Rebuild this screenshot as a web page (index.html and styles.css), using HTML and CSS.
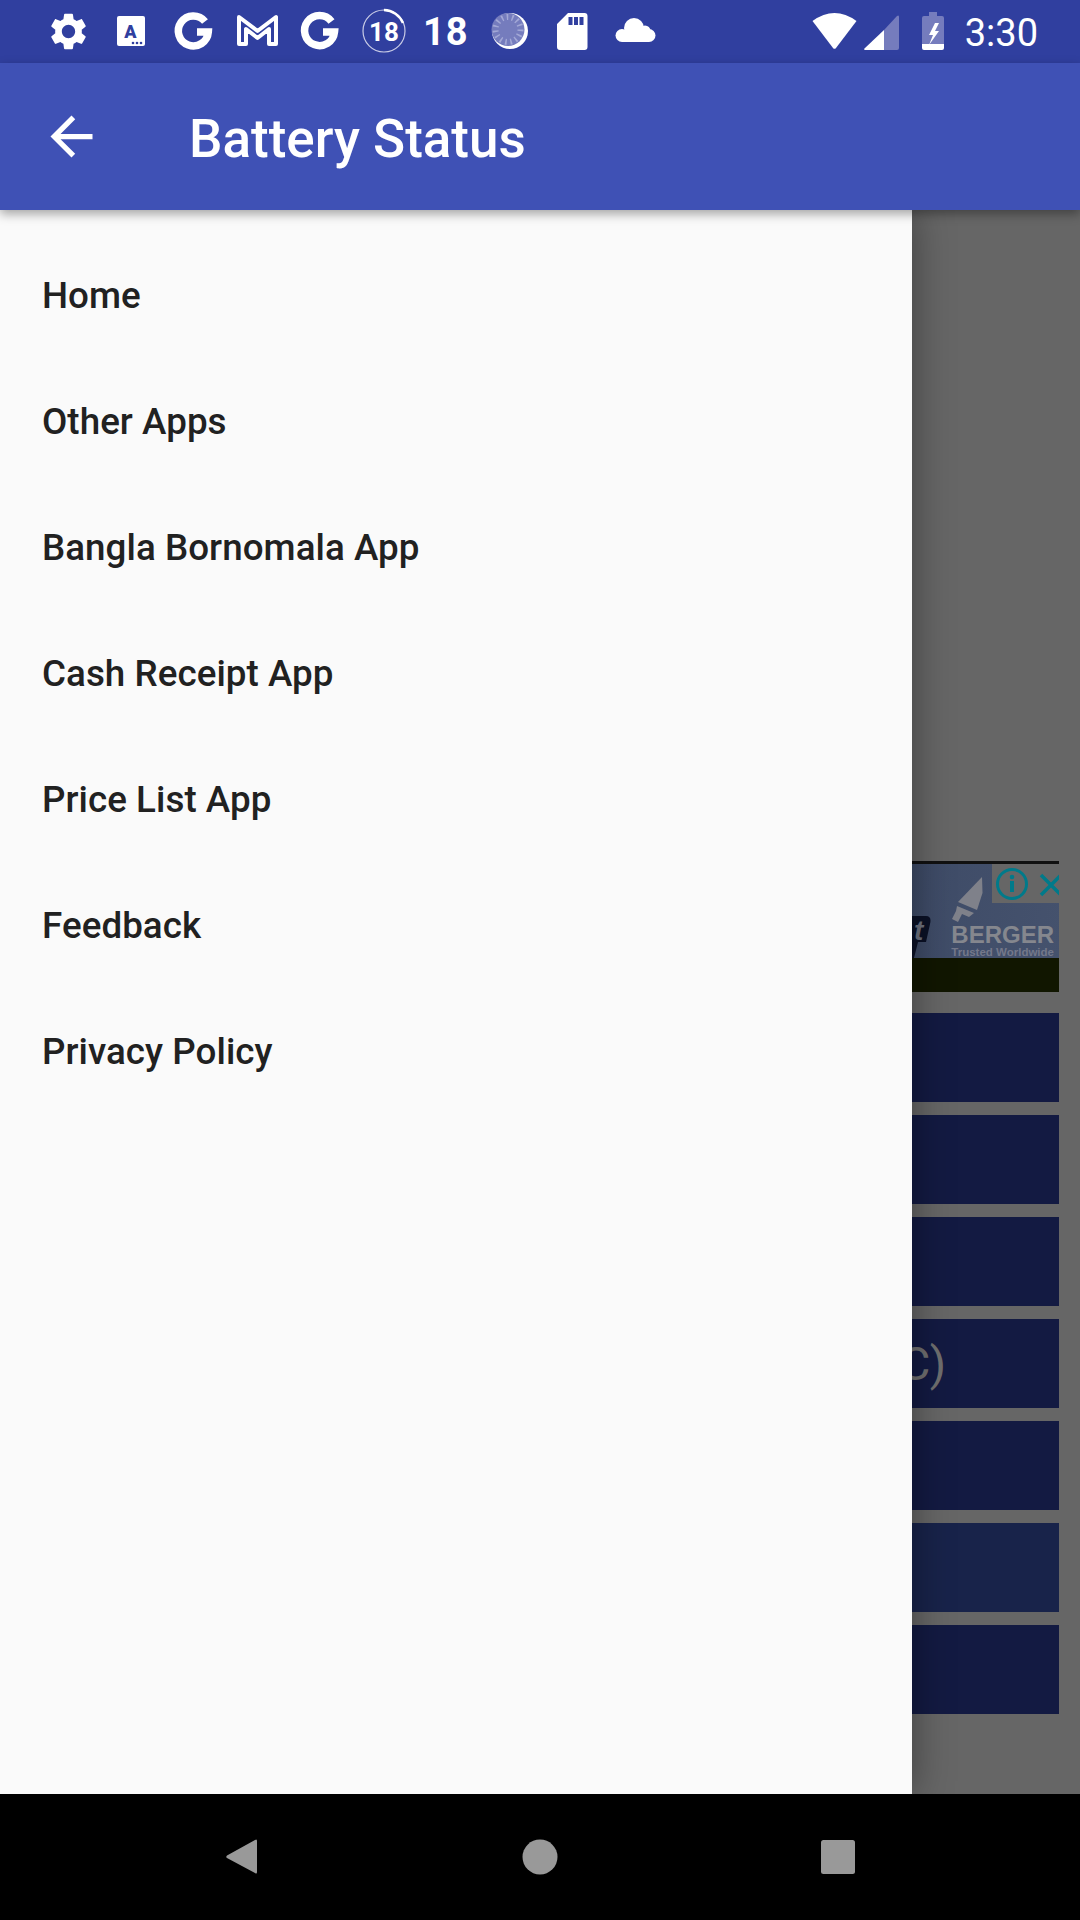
FILE: index.html
```html
<!DOCTYPE html>
<html lang="en">
<head>
    <meta charset="UTF-8">
    <title>Battery Status</title>
    <link rel="stylesheet" href="styles.css">
</head>
<body>
    <div class="screen">
        <!-- Each status icon is drawn in screen coordinates through its viewBox -->
        <div class="status-bar">
            <div class="status-group">
                <svg class="status-icon" width="62" height="63" viewBox="40 0 62 63">
                    <path transform="translate(46.3 9.3) scale(1.85)" d="M19.14 12.94c.04-.3.06-.61.06-.94 0-.32-.02-.64-.07-.94l2.03-1.58c.18-.14.23-.41.12-.61l-1.92-3.32c-.12-.22-.37-.29-.59-.22l-2.39.96c-.5-.38-1.03-.7-1.62-.94l-.36-2.54c-.04-.24-.24-.41-.48-.41h-3.84c-.24 0-.43.17-.47.41l-.36 2.54c-.59.24-1.13.57-1.62.94l-2.39-.96c-.22-.08-.47 0-.59.22L2.74 8.87c-.12.21-.08.47.12.61l2.03 1.58c-.05.3-.09.63-.09.94s.02.64.07.94l-2.03 1.58c-.18.14-.23.41-.12.61l1.92 3.32c.12.22.37.29.59.22l2.39-.96c.5.38 1.03.7 1.62.94l.36 2.54c.05.24.24.41.48.41h3.84c.24 0 .44-.17.47-.41l.36-2.54c.59-.24 1.13-.56 1.62-.94l2.39.96c.22.08.47 0 .59-.22l1.92-3.32c.12-.22.07-.47-.12-.61l-2.01-1.58zM12 15.6c-1.98 0-3.6-1.62-3.6-3.6s1.62-3.6 3.6-3.6 3.6 1.62 3.6 3.6-1.62 3.6-3.6 3.6z"/>
                </svg>
                <svg class="status-icon" width="58" height="63" viewBox="102 0 58 63">
                    <rect x="117" y="16" width="28" height="30" rx="2"/>
                    <text class="key-letter" x="130.5" y="38">A</text>
                    <circle class="cut" cx="133" cy="43" r="1.3"/>
                    <circle class="cut" cx="137" cy="43" r="1.3"/>
                    <circle class="cut" cx="141" cy="43" r="1.3"/>
                </svg>
                <svg class="status-icon" width="65" height="63" viewBox="160 0 65 63">
                    <path class="g-mark" d="M205 21.5A15 15 0 1 0 208.3 32H197"/>
                </svg>
                <svg class="status-icon" width="65" height="63" viewBox="225 0 65 63">
                    <path class="m-mark" d="M239 17L257.500 31L276 17V44H269V29L257.500 38L246 29V44H239Z"/>
                </svg>
                <svg class="status-icon" width="60" height="63" viewBox="290 0 60 63">
                    <path class="g-mark" d="M331.500 21.500A15 15 0 1 0 334.500 32H323"/>
                </svg>
                <svg class="status-icon" width="70" height="63" viewBox="350 0 70 63">
                    <circle class="ring" cx="384" cy="31" r="21"/>
                    <path class="ring-arc" d="M384 10A21 21 0 0 1 403 23"/>
                    <text class="ring-num" x="384" y="41">18</text>
                </svg>
                <span class="status-num">18</span>
                <svg class="status-icon" width="66" height="63" viewBox="476 0 66 63">
                    <circle cx="510" cy="31" r="18"/>
                    <circle class="disc" cx="508" cy="29.500" r="16.500"/>
                    <circle class="disc-ticks" cx="508" cy="29.500" r="12.500"/>
                </svg>
                <svg class="status-icon" width="60" height="63" viewBox="542 0 60 63">
                    <path d="M568 13H584.500a3 3 0 0 1 3 3V47a3 3 0 0 1-3 3H560a3 3 0 0 1-3-3V24Z"/>
                    <rect class="cut" x="568.500" y="17" width="4" height="8"/>
                    <rect class="cut" x="574" y="17" width="4" height="8"/>
                    <rect class="cut" x="579.500" y="17" width="4" height="8"/>
                </svg>
                <svg class="status-icon" width="70" height="63" viewBox="602 0 70 63">
                    <circle cx="622" cy="35.500" r="6.500"/>
                    <circle cx="634" cy="28" r="10"/>
                    <circle cx="645" cy="31" r="5.500"/>
                    <circle cx="649" cy="35.500" r="6.500"/>
                    <rect x="622" y="32" width="27" height="10"/>
                </svg>
            </div>
            <div class="status-group">
                <svg class="status-icon" width="57" height="63" viewBox="805 0 57 63">
                    <path d="M813.500 21Q835.500 5 857.500 21L836.800 48.200Q835.500 49.500 834.200 48.200Z"/>
                </svg>
                <svg class="status-icon" width="48" height="63" viewBox="862 0 48 63">
                    <path class="dim" d="M885 30L898 16Q900 14.500 900 17V48a2 2 0 0 1-2 2H885Z"/>
                    <path d="M885 30V50H866Q864.500 50 865.500 48.500Z"/>
                </svg>
                <svg class="status-icon" width="56" height="63" viewBox="910 0 56 63">
                    <path class="dim" d="M930 12H938V16H943a2 2 0 0 1 2 2V44H923V18a2 2 0 0 1 2-2H930Z"/>
                    <path d="M923 44H945V48a2 2 0 0 1-2 2H925a2 2 0 0 1-2-2Z"/>
                    <path d="M936 23L930 35H934L930 45L940 31H936L940 23Z"/>
                </svg>
                <span class="status-time">3:30</span>
            </div>
        </div>

        <div class="toolbar">
            <svg class="back-icon" width="63" height="63" viewBox="0 0 24 24">
                <path d="M20 11H7.830l5.590-5.590L12 4l-8 8 8 8 1.410-1.410L7.830 13H20v-2z"/>
            </svg>
            <h1 class="toolbar-title">Battery Status</h1>
        </div>

        <div class="stage">
            <div class="main">
                <div class="ad">
                    <div class="ad-image">
                        <svg class="ad-art" width="150" height="94" viewBox="912 864 150 94">
                            <path class="ad-blob" d="M912 916H926Q932 916 930 924L926 942H918L914 958H904V916Z"/>
                            <text class="ad-slogan" x="914" y="940">t</text>
                            <path class="ad-brush" d="M982 877L982.500 893L977 910L958 902Z"/>
                            <path class="ad-handle" d="M957 906L974 913L969 917L962 914L958 922L952 919L956 911Z"/>
                        </svg>
                        <div class="ad-brand">
                            <span class="ad-name">BERGER</span>
                            <span class="ad-tagline">Trusted Worldwide</span>
                        </div>
                        <div class="ad-choices">
                            <svg width="67" height="39" viewBox="992 864 67 39">
                                <circle class="ad-info" cx="1012" cy="884" r="14.500"/>
                                <circle class="ad-dot" cx="1012" cy="877" r="2.300"/>
                                <rect class="ad-dot" x="1010" y="881" width="4" height="11"/>
                                <path class="ad-close" d="M1041 875L1061 895M1061 875L1041 895"/>
                            </svg>
                        </div>
                    </div>
                    <div class="ad-band"></div>
                </div>
                <div class="menu-buttons">
                    <div class="menu-btn"></div>
                    <div class="menu-btn"></div>
                    <div class="menu-btn"></div>
                    <div class="menu-btn">C)</div>
                    <div class="menu-btn"></div>
                    <div class="menu-btn menu-btn-pressed"></div>
                    <div class="menu-btn"></div>
                </div>
            </div>

            <ul class="drawer">
                <li class="drawer-item">Home</li>
                <li class="drawer-item">Other Apps</li>
                <li class="drawer-item">Bangla Bornomala App</li>
                <li class="drawer-item">Cash Receipt App</li>
                <li class="drawer-item">Price List App</li>
                <li class="drawer-item">Feedback</li>
                <li class="drawer-item">Privacy Policy</li>
            </ul>
        </div>

        <div class="nav-bar">
            <svg width="34" height="38" viewBox="225 1838 34 38">
                <path class="nav-shape" d="M255 1840Q257 1838.500 257 1841V1872Q257 1874.500 255 1873L227 1858Q225.500 1857 227 1855.500Z"/>
            </svg>
            <svg width="36" height="36" viewBox="0 0 36 36">
                <circle class="nav-shape" cx="18" cy="18" r="17.500"/>
            </svg>
            <svg width="34" height="34" viewBox="0 0 34 34">
                <rect class="nav-shape" x="0" y="0" width="34" height="34" rx="2.500"/>
            </svg>
        </div>
    </div>
</body>
</html>
```

FILE: styles.css
```css
* {
    margin: 0;
    padding: 0;
    box-sizing: border-box;
}

body {
    background: #000;
    font-family: 'Roboto', sans-serif;
}

.screen {
    display: flex;
    flex-direction: column;
    width: 1080px;
    height: 1920px;
    overflow: hidden;
}

/* Status bar */

.status-bar {
    display: flex;
    justify-content: space-between;
    flex: none;
    height: 63px;
    padding: 0 42px 0 40px;
    background: #303f9f;
    color: #fff;
}

.status-group {
    display: flex;
    align-items: center;
}

.status-icon {
    display: block;
    flex: none;
    fill: #fff;
}

.status-num {
    width: 53px;
    margin: 2px 0 0 3px;
    font-size: 38px;
    font-weight: 700;
    line-height: 63px;
    letter-spacing: 1px;
}

.status-time {
    margin-top: 4px;
    font-size: 38px;
    line-height: 63px;
}

.key-letter {
    font-family: 'Roboto', sans-serif;
    font-size: 18px;
    font-weight: 900;
    text-anchor: middle;
    fill: #303f9f;
}

.cut {
    fill: #303f9f;
}

.dim {
    fill: #757cbd;
}

.g-mark {
    fill: none;
    stroke: #fff;
    stroke-width: 7.5;
}

.m-mark {
    fill: none;
    stroke: #fff;
    stroke-width: 4;
    stroke-linejoin: round;
}

.ring {
    fill: none;
    stroke: #c9cce6;
    stroke-width: 1.2;
}

.ring-arc {
    fill: none;
    stroke: #fff;
    stroke-width: 2.5;
}

.ring-num {
    font-family: 'Roboto', sans-serif;
    font-size: 26px;
    font-weight: 700;
    text-anchor: middle;
}

.disc {
    fill: #757cbd;
}

.disc-ticks {
    fill: none;
    stroke: #a3a8d6;
    stroke-width: 6;
    stroke-dasharray: 1.6 3.6;
}

/* Toolbar */

.toolbar {
    position: relative;
    z-index: 2;
    display: flex;
    align-items: center;
    flex: none;
    height: 147px;
    padding-left: 40px;
    background: #3f51b5;
    box-shadow: 0 4px 10px rgba(0, 0, 0, 0.35);
}

.back-icon {
    flex: none;
    fill: #fff;
}

.toolbar-title {
    margin: 5px 0 0 86px;
    color: #fff;
    font-size: 53px;
    font-weight: 500;
    line-height: 1;
}

/* Dimmed page behind the drawer */

.stage {
    position: relative;
    flex: 1;
    background: #666;
    overflow: hidden;
}

.main {
    display: flex;
    flex-direction: column;
    gap: 21px;
    padding: 651px 21px 0;
}

.ad {
    border-top: 3px solid #111;
}

.ad-image {
    position: relative;
    display: flex;
    justify-content: flex-end;
    align-items: flex-end;
    height: 94px;
    background: linear-gradient(100deg, #35415c 0%, #3c4965 80%, #45526d 100%);
}

.ad-art {
    position: absolute;
    top: 0;
    right: -3px;
}

.ad-blob {
    fill: #0b1126;
}

.ad-slogan {
    font-family: 'Liberation Sans', sans-serif;
    font-size: 28px;
    font-style: italic;
    font-weight: 700;
    fill: #6f7380;
}

.ad-brush {
    fill: #7f818a;
}

.ad-handle {
    fill: #7f818a;
}

.ad-brand {
    position: relative;
    display: flex;
    flex-direction: column;
    align-items: flex-end;
    padding-right: 5px;
    color: #85878e;
    font-family: 'Liberation Sans', sans-serif;
}

.ad-name {
    font-size: 24px;
    font-weight: 700;
    line-height: 20px;
}

.ad-tagline {
    margin-top: 1px;
    font-size: 11.500px;
    font-weight: 700;
    line-height: 12px;
    color: #74788a;
}

.ad-choices {
    position: absolute;
    top: 0;
    right: 0;
    width: 67px;
    height: 39px;
    background: #666;
}

.ad-choices svg {
    display: block;
}

.ad-info {
    fill: none;
    stroke: #007a8a;
    stroke-width: 3;
}

.ad-dot {
    fill: #007a8a;
}

.ad-close {
    fill: none;
    stroke: #007a8a;
    stroke-width: 3.5;
}

.ad-band {
    height: 34px;
    background: #111600;
}

.menu-buttons {
    display: flex;
    flex-direction: column;
    gap: 13px;
}

.menu-btn {
    display: flex;
    justify-content: flex-end;
    align-items: center;
    height: 89px;
    padding-right: 113px;
    background: #131a42;
    color: #6f6f6f;
    font-size: 47px;
    line-height: 1;
}

.menu-btn-pressed {
    background: #18234a;
}

/* Navigation drawer */

.drawer {
    position: absolute;
    top: 0;
    bottom: 0;
    left: 0;
    width: 912px;
    padding-top: 22px;
    background: #fafafa;
    box-shadow: 0 0 38px rgba(0, 0, 0, 0.4);
    list-style: none;
}

.drawer-item {
    display: flex;
    align-items: center;
    height: 126px;
    padding-left: 42px;
    color: #212121;
    font-size: 36.750px;
    font-weight: 500;
    letter-spacing: 0.05px;
}

/* Navigation bar */

.nav-bar {
    position: relative;
    z-index: 2;
    display: flex;
    justify-content: space-between;
    align-items: center;
    flex: none;
    height: 126px;
    padding: 0 225px 0 225px;
    background: #000;
}

.nav-shape {
    fill: #999;
}
```
